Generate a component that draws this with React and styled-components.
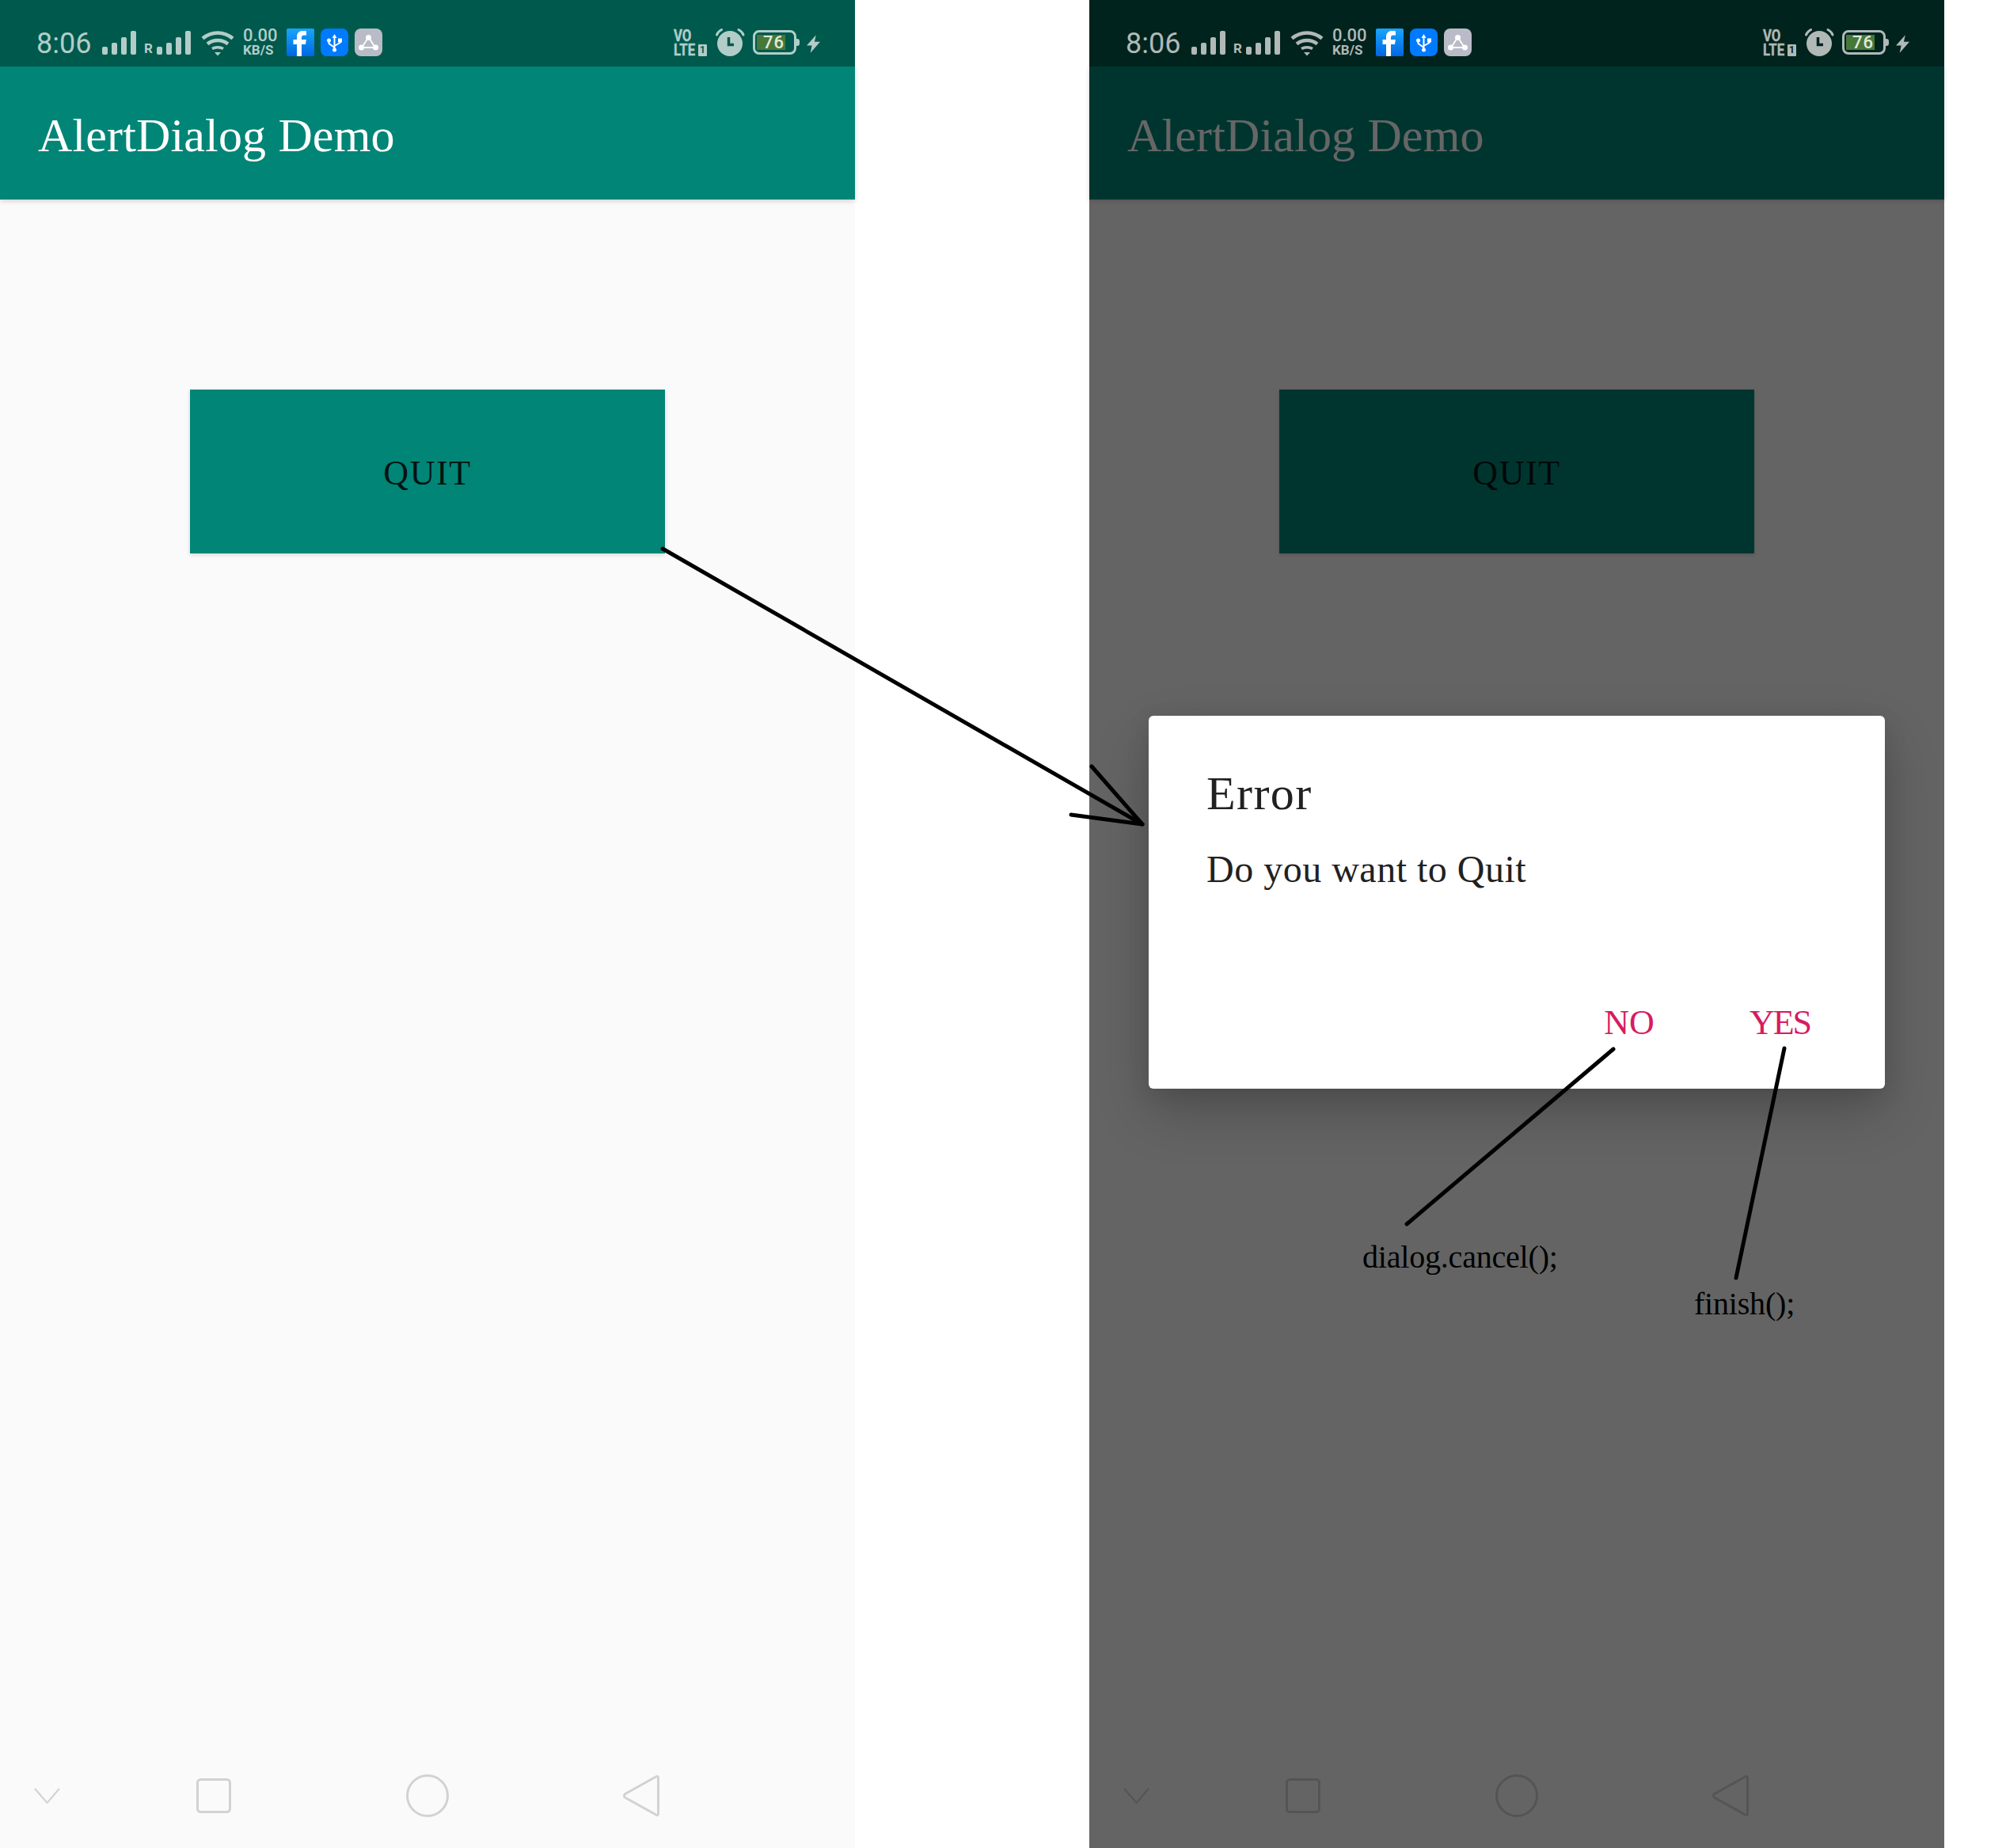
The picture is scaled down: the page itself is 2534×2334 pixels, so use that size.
import React from "react";
import styled, { createGlobalStyle } from "styled-components";

const Global = createGlobalStyle`
  html, body { margin: 0; padding: 0; background: #fff; overflow: hidden; }
  #root { width: 2534px; height: 2334px; }
`;

const Page = styled.div`
  position: relative;
  width: 2534px;
  height: 2334px;
  display: flex;
  gap: 296px;
  background: #fff;
  overflow: hidden;
  font-family: "Liberation Serif", serif;
`;

const PhoneFrame = styled.div`
  position: relative;
  width: 1080px;
  height: 2334px;
  display: flex;
  flex-direction: column;
  background: #fafafa;
`;

const StatusBar = styled.div`
  position: relative;
  z-index: 3;
  height: 84px;
  flex: none;
  display: flex;
  align-items: flex-start;
  justify-content: space-between;
  padding: 35px 44px 0 46px;
  box-sizing: border-box;
  background: ${(p) => (p.$dim ? "#00231e" : "#00594d")};
  color: ${(p) => (p.$dim ? "#b0b9b6" : "#b2cdc8")};
  font-family: Roboto, sans-serif;
`;

const StatusGroup = styled.div`
  display: flex;
  align-items: flex-start;
`;

const Clock = styled.span`
  width: 68px;
  margin: 2px 15px 0 0;
  font-size: 36px;
  line-height: 36px;
  white-space: nowrap;
`;

const Roaming = styled.span`
  width: 10px;
  margin: 18px 6px 0 10px;
  font-size: 17px;
  line-height: 17px;
  font-weight: 700;
`;

const Speed = styled.div`
  width: 44px;
  margin: 0 11px;
  display: flex;
  flex-direction: column;
  white-space: nowrap;
`;

const SpeedValue = styled.span`
  margin-top: 1px;
  font-size: 22px;
  line-height: 18px;
  font-weight: 500;
`;

const SpeedUnit = styled.span`
  margin-top: 2px;
  font-size: 17px;
  line-height: 15px;
  font-weight: 700;
`;

const AppTile = styled.div`
  width: 35px;
  height: 35px;
  margin: 1px 8px 0 0;
  border-radius: ${(p) => p.$radius}px;
  background: ${(p) => p.$bg};
  overflow: hidden;
  display: flex;
`;

const Volte = styled.div`
  width: 42px;
  margin: 2px 11px 0 0;
  display: flex;
  flex-direction: column;
  font-family: Roboto, sans-serif;
  font-weight: 700;
`;

const VolteLine = styled.div`
  display: flex;
  align-items: center;
  gap: 1px;
  height: 17.500px;
  font-size: 21px;
  line-height: 17.500px;
  white-space: nowrap;
  -webkit-text-stroke: 0.4px currentColor;
`;

const Narrow = styled.span`
  display: inline-block;
  width: ${(p) => p.$w}px;
  transform: scaleX(0.8);
  transform-origin: left center;
`;

const SimBox = styled.span`
  width: 11px;
  height: 15px;
  border-radius: 1px;
  background: currentColor;
  display: flex;
  align-items: center;
  justify-content: center;
  -webkit-text-stroke: 0;
`;

const SimDigit = styled.span`
  font-size: 12px;
  line-height: 15px;
  color: ${(p) => (p.$dim ? "#00231e" : "#00594d")};
`;

const Battery = styled.div`
  position: relative;
  width: 55px;
  height: 31px;
  margin: 3px 13px 0 10px;
  box-sizing: border-box;
  border: 3px solid currentColor;
  border-radius: 8px;
  padding: 3px 2px;
  display: flex;
  &::after {
    content: "";
    position: absolute;
    right: -7px;
    top: 8px;
    width: 4px;
    height: 9px;
    border-radius: 0 3px 3px 0;
    background: currentColor;
  }
`;

const BatteryFill = styled.div`
  width: 36px;
  height: 19px;
  box-sizing: border-box;
  padding-left: 8px;
  background: #46783a;
  color: #e2ead9;
  font-size: 22px;
  line-height: 19px;
  letter-spacing: 1px;
  font-weight: 500;
  white-space: nowrap;
`;

const AppBar = styled.header`
  position: relative;
  z-index: 1;
  height: 168px;
  flex: none;
  box-sizing: border-box;
  padding: 6px 0 0 48px;
  display: flex;
  align-items: center;
  background: #008577;
  color: #fff;
  font-size: 60px;
  letter-spacing: 0.15px;
  box-shadow: 0 2px 6px rgba(0, 0, 0, 0.16);
`;

const Body = styled.main`
  flex: 1;
  display: flex;
  justify-content: center;
  padding-top: 240px;
  align-items: flex-start;
`;

const QuitButton = styled.button`
  width: 600px;
  height: 207px;
  border: 0;
  padding: 3px 0 0;
  background: #008577;
  color: rgba(0, 0, 0, 0.87);
  font-family: "Liberation Serif", serif;
  font-size: 44px;
  letter-spacing: 1.6px;
  box-shadow: 0 2px 5px rgba(0, 0, 0, 0.14);
`;

const NavBar = styled.nav`
  height: 132px;
  flex: none;
  display: grid;
  grid-template-columns: 135px 270px 270px 270px;
  align-items: center;
  justify-items: center;
`;

const Chevron = styled.svg`
  justify-self: start;
  margin-left: 43px;
`;

const Scrim = styled.div`
  position: absolute;
  z-index: 2;
  inset: 84px 0 0 0;
  background: rgba(0, 0, 0, 0.6);
  display: flex;
  justify-content: center;
  align-items: flex-start;
  padding-top: 820px;
`;

const Dialog = styled.div`
  width: 930px;
  height: 471px;
  box-sizing: border-box;
  padding: 63px 94px 0 73px;
  border-radius: 6px;
  background: #fff;
  box-shadow: 0 30px 70px rgba(0, 0, 0, 0.2), 0 8px 30px rgba(0, 0, 0, 0.1);
  display: flex;
  flex-direction: column;
`;

const DialogTitle = styled.div`
  height: 70px;
  font-size: 60px;
  line-height: 70px;
  letter-spacing: 1.4px;
  color: #212121;
`;

const DialogMessage = styled.div`
  margin-top: 31px;
  font-size: 48px;
  line-height: 60px;
  letter-spacing: 0.5px;
  color: #212121;
`;

const DialogActions = styled.div`
  margin-top: auto;
  margin-bottom: 58px;
  display: flex;
  justify-content: flex-end;
  gap: 120px;
`;

const DialogAction = styled.span`
  font-size: 44px;
  line-height: 50px;
  letter-spacing: ${(p) => p.$tracking}px;
  color: #d81b60;
`;

const Annotations = styled.svg`
  position: absolute;
  z-index: 5;
  left: 0;
  top: 0;
`;

const Note = styled.span`
  position: absolute;
  z-index: 5;
  left: ${(p) => p.$x}px;
  top: ${(p) => p.$y}px;
  font-size: 40px;
  line-height: 46px;
  letter-spacing: -0.2px;
  color: #000;
  white-space: nowrap;
`;

const BarsIcon = styled.svg`
  margin-top: 4px;
`;

const WifiIcon = styled.svg`
  margin: 3px 0 0 13px;
`;

const BoltIcon = styled.svg`
  margin-top: 9px;
`;

const Bars = () => (
  <BarsIcon width="43" height="30" viewBox="0 0 43 30" fill="currentColor">
    <rect x="0" y="20" width="7" height="10" rx="2" />
    <rect x="12" y="15" width="7" height="15" rx="2" />
    <rect x="24" y="8" width="7" height="22" rx="2" />
    <rect x="36" y="0" width="7" height="30" rx="2" />
  </BarsIcon>
);

const Wifi = () => (
  <WifiIcon width="42" height="33" viewBox="0 0 42 33" fill="none" stroke="currentColor" strokeWidth="4.5">
    <path d="M2 10.5C13 1 29 1 40 10.5" />
    <path d="M8 17.5C15.5 11.5 26.500 11.5 34 17.5" />
    <path d="M14 23.500C18 21 24 21 28 23.500" strokeWidth="3.5" />
    <path d="M17 28H25L21 32.5Z" fill="currentColor" stroke="none" />
  </WifiIcon>
);

const FacebookTile = () => (
  <AppTile $radius={2} $bg="linear-gradient(#18a5fb, #0166e3)">
    <svg width="35" height="35" viewBox="0 0 35 35" fill="#fff">
      <path d="M13 35V20H8.500V14H13V10.500C13 5.500 16 3 20.500 3C22.500 3 24 3.200 25 3.400V8.500H22C20 8.500 19 9.500 19 11.300V14H24.800L24 20H19V35Z" />
    </svg>
  </AppTile>
);

const UsbTile = () => (
  <AppTile $radius={8} $bg="#007afe">
    <svg width="35" height="35" viewBox="0 0 35 35" fill="#fff" stroke="#fff">
      <path d="M17.500 7L20.500 12H14.500Z" stroke="none" />
      <path d="M17.500 11V27M17.500 24L10.500 19V16M17.500 22L24.500 18V16" fill="none" strokeWidth="2" />
      <circle cx="17.500" cy="27" r="2.500" stroke="none" />
      <circle cx="10.500" cy="15" r="2.500" stroke="none" />
      <rect x="22" y="12.500" width="5" height="5" stroke="none" />
    </svg>
  </AppTile>
);

const ShareTile = () => (
  <AppTile $radius={8} $bg="#b9bcc7">
    <svg width="35" height="35" viewBox="0 0 35 35" fill="#fff" stroke="#fff">
      <path d="M17.500 11L9 24H26Z" fill="none" strokeWidth="1.800" />
      <circle cx="17.500" cy="11.500" r="3.500" stroke="none" />
      <circle cx="8.500" cy="24" r="3.500" stroke="none" />
      <circle cx="26.500" cy="24" r="3.500" stroke="none" />
    </svg>
  </AppTile>
);

const ClockWrap = styled.div`
  --clock-hand: ${(p) => (p.$dim ? "#00231e" : "#00594d")};
  height: 36px;
`;

const AlarmClock = () => (
  <svg width="37" height="36" viewBox="0 0 37 36" fill="currentColor">
    <circle cx="18" cy="20" r="16" />
    <path d="M1.500 9C2.500 6 4.500 4 7.500 2.500" fill="none" stroke="currentColor" strokeWidth="3" strokeLinecap="round" />
    <path d="M35 9C34 6 32 4 29 2.500" fill="none" stroke="currentColor" strokeWidth="3" strokeLinecap="round" />
    <path d="M16.500 12V21.500H23" fill="none" stroke="var(--clock-hand)" strokeWidth="3.500" />
  </svg>
);

const Bolt = () => (
  <BoltIcon width="17" height="23" viewBox="0 0 18 24" fill="currentColor">
    <path d="M12.500 0L0 14H7L5 24L18 9H10.500Z" />
  </BoltIcon>
);

const Status = ({ dim }) => (
  <StatusBar $dim={dim}>
    <StatusGroup>
      <Clock>8:06</Clock>
      <Bars />
      <Roaming>R</Roaming>
      <Bars />
      <Wifi />
      <Speed>
        <SpeedValue>0.00</SpeedValue>
        <SpeedUnit>KB/S</SpeedUnit>
      </Speed>
      <FacebookTile />
      <UsbTile />
      <ShareTile />
    </StatusGroup>
    <StatusGroup>
      <Volte>
        <VolteLine><Narrow $w={30}>VO</Narrow></VolteLine>
        <VolteLine>
          <Narrow $w={30}>LTE</Narrow>
          <SimBox><SimDigit $dim={dim}>1</SimDigit></SimBox>
        </VolteLine>
      </Volte>
      <ClockWrap $dim={dim}><AlarmClock /></ClockWrap>
      <Battery>
        <BatteryFill>76</BatteryFill>
      </Battery>
      <Bolt />
    </StatusGroup>
  </StatusBar>
);

const Navigation = ({ color }) => (
  <NavBar>
    <Chevron width="33" height="20" viewBox="0 0 33 20" fill="none" stroke={color} strokeWidth="2">
      <path d="M1 1L16.500 19L32 1" />
    </Chevron>
    <svg width="44" height="44" viewBox="0 0 44 44" fill="none" stroke={color} strokeWidth="3">
      <rect x="1.500" y="1.500" width="41" height="41" rx="4" />
    </svg>
    <svg width="54" height="54" viewBox="0 0 54 54" fill="none" stroke={color} strokeWidth="3">
      <circle cx="27" cy="27" r="25.500" />
    </svg>
    <svg width="46" height="52" viewBox="0 0 46 52" fill="none" stroke={color} strokeWidth="3">
      <path d="M42 1.800C43.500 1 44.500 2 44.500 3.500V48.500C44.500 50 43.500 51 42 50.200L3 28.500C1 27 1 25 3 23.500Z" strokeLinejoin="round" />
    </svg>
  </NavBar>
);

const Phone = ({ dim, children }) => (
  <PhoneFrame>
    <Status dim={dim} />
    <AppBar>AlertDialog Demo</AppBar>
    <Body>
      <QuitButton>QUIT</QuitButton>
    </Body>
    <Navigation color="#d2d2d2" />
    {children}
  </PhoneFrame>
);

export default function App() {
  return (
    <Page>
      <Global />
      <Phone />
      <Phone dim>
        <Scrim>
          <Dialog>
            <DialogTitle>Error</DialogTitle>
            <DialogMessage>Do you want to Quit</DialogMessage>
            <DialogActions>
              <DialogAction $tracking={0}>NO</DialogAction>
              <DialogAction $tracking={-2}>YES</DialogAction>
            </DialogActions>
          </Dialog>
        </Scrim>
      </Phone>
      <Annotations width="2534" height="2334" viewBox="0 0 2534 2334" fill="none" stroke="#000" strokeWidth="5" strokeLinecap="round" strokeLinejoin="round">
        <path d="M837 693L1443 1041" />
        <path d="M1379 968L1443 1041L1353 1029" />
        <path d="M2038 1325L1777 1546" />
        <path d="M2254 1324L2193 1614" />
      </Annotations>
      <Note $x={1721} $y={1565}>dialog.cancel();</Note>
      <Note $x={2140} $y={1624}>finish();</Note>
    </Page>
  );
}
